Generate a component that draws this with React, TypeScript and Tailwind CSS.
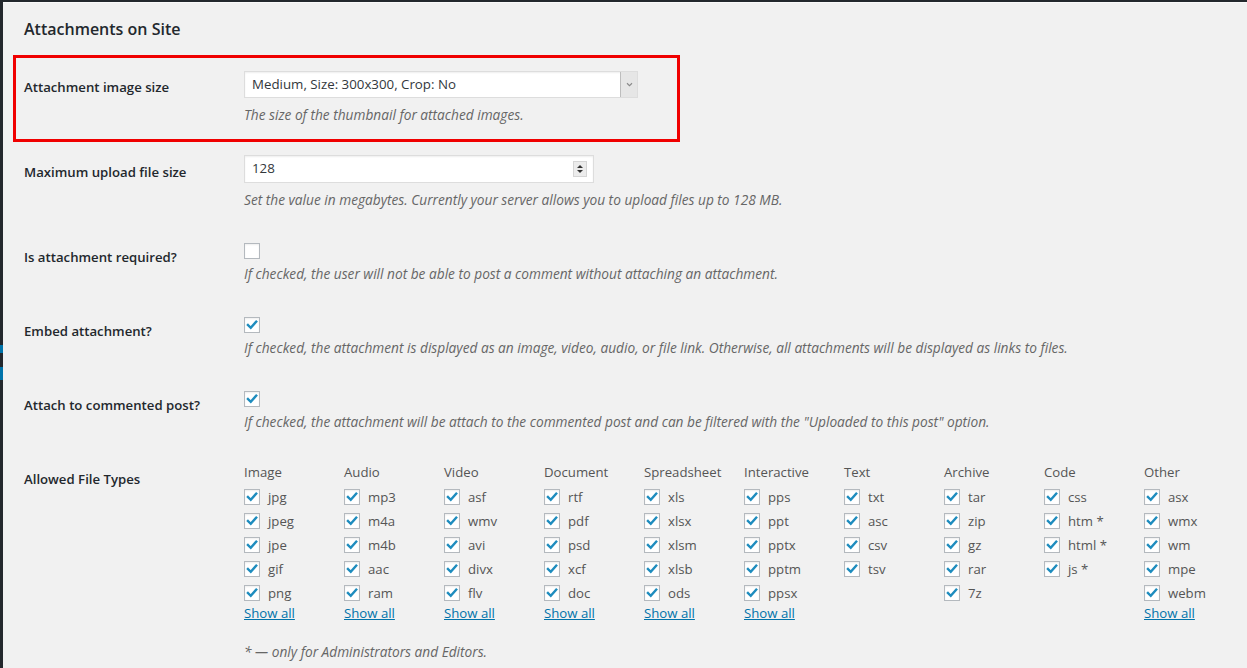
import React from 'react';

const groups: { title: string; items: string[]; showAll?: boolean }[] = [
  { title: 'Image', items: ['jpg', 'jpeg', 'jpe', 'gif', 'png'], showAll: true },
  { title: 'Audio', items: ['mp3', 'm4a', 'm4b', 'aac', 'ram'], showAll: true },
  { title: 'Video', items: ['asf', 'wmv', 'avi', 'divx', 'flv'], showAll: true },
  { title: 'Document', items: ['rtf', 'pdf', 'psd', 'xcf', 'doc'], showAll: true },
  { title: 'Spreadsheet', items: ['xls', 'xlsx', 'xlsm', 'xlsb', 'ods'], showAll: true },
  { title: 'Interactive', items: ['pps', 'ppt', 'pptx', 'pptm', 'ppsx'], showAll: true },
  { title: 'Text', items: ['txt', 'asc', 'csv', 'tsv'] },
  { title: 'Archive', items: ['tar', 'zip', 'gz', 'rar', '7z'] },
  { title: 'Code', items: ['css', 'htm *', 'html *', 'js *'] },
  { title: 'Other', items: ['asx', 'wmx', 'wm', 'mpe', 'webm'], showAll: true },
];

const font = { fontFamily: '"Open Sans", "Noto Sans", sans-serif' };

const Check = ({ checked }: { checked: boolean }) => (
  <span className="w-4 h-4 shrink-0 bg-white border border-[#b4b9be] shadow-[inset_0_1px_2px_rgba(0,0,0,0.07)] flex items-center justify-center">
    {checked && (
      <svg viewBox="0 0 16 16" className="w-4 h-4">
        <path d="M3.4 8 L6.6 11.2 L12.8 4.2" fill="none" stroke="#1e8cbe" strokeWidth="2.8" strokeLinecap="square" />
      </svg>
    )}
  </span>
);

const Desc = ({ children, className = '' }: { children: React.ReactNode; className?: string }) => (
  <p className={`text-[13.7px] leading-5 italic text-[#666] ${className}`}>{children}</p>
);

const Label = ({ children, className = '' }: { children: React.ReactNode; className?: string }) => (
  <div className={`w-[220px] shrink-0 text-[13.2px] leading-5 font-semibold text-[#23282d] ${className}`}>{children}</div>
);

export default function App() {
  return (
    <div className="w-[1247px] h-[668px] overflow-hidden flex bg-[#f1f1f1]" style={font}>
      <div className="w-[3px] flex flex-col bg-[#23282d]">
        <div className="h-[345px]" />
        <div className="h-[8px] bg-[#0073aa]" />
        <div className="h-[14px]" />
        <div className="h-[13px] bg-[#0073aa]" />
      </div>
      <div className="flex-1 flex flex-col">
        <div className="h-[2px] bg-[#23282d]" />
        <div className="h-[1px] bg-[#fafafa]" />
        <div className="pl-[21px] flex flex-col">
          <h2 className="h-[53px] pt-[16px] text-[16px] leading-5 font-semibold text-[#23282d]">Attachments on Site</h2>

          {/* row 1 */}
          <div className="relative flex h-[84px]">
            <div className="absolute left-[-11px] top-[-1px] w-[667px] h-[87px] border-[3px] border-[#f00000]" />
            <Label className="pt-[21px]">Attachment image size</Label>
            <div className="pt-[15px]">
              <div className="w-[394px] h-[27px] bg-white border border-[#ddd] shadow-[inset_0_1px_2px_rgba(0,0,0,0.07)] flex items-center justify-between">
                <span className="pl-[7px] text-[13.3px] text-[#32373c]">Medium, Size: 300x300, Crop: No</span>
                <span className="w-[17px] h-[25px] bg-[#e6e6e6] border-l border-[#bdbdbd] flex items-center justify-center">
                  <svg viewBox="0 0 8 6" className="w-[7px] h-[5px]">
                    <path d="M1 1.5 L4 4.5 L7 1.5" fill="none" stroke="#888" strokeWidth="1.3" />
                  </svg>
                </span>
              </div>
              <Desc className="mt-[7px]">The size of the thumbnail for attached images.</Desc>
            </div>
          </div>

          {/* row 2 */}
          <div className="flex h-[88px]">
            <Label className="pt-[22px]">Maximum upload file size</Label>
            <div className="pt-[15px]">
              <div className="w-[350px] h-[28px] bg-white border border-[#ddd] shadow-[inset_0_1px_2px_rgba(0,0,0,0.07)] flex items-center justify-between">
                <span className="pl-[7px] text-[13.3px] text-[#32373c]">128</span>
                <span className="mr-[6px] w-[14px] h-[16px] bg-[#ececec] border border-[#d5d5d5] flex flex-col items-center justify-center gap-[2px]">
                  <svg viewBox="0 0 6 3" className="w-[6px] h-[3px]"><path d="M0 3 L3 0 L6 3 Z" fill="#333" /></svg>
                  <svg viewBox="0 0 6 3" className="w-[6px] h-[3px]"><path d="M0 0 L3 3 L6 0 Z" fill="#333" /></svg>
                </span>
              </div>
              <Desc className="mt-[7px]">
                Set the value in megabytes. Currently your server allows you to upload files up to 128 MB.
              </Desc>
            </div>
          </div>

          {/* rows 3-5 */}
          {[
            { label: 'Is attachment required?', checked: false, desc: 'If checked, the user will not be able to post a comment without attaching an attachment.' },
            { label: 'Embed attachment?', checked: true, desc: 'If checked, the attachment is displayed as an image, video, audio, or file link. Otherwise, all attachments will be displayed as links to files.' },
            { label: 'Attach to commented post?', checked: true, desc: 'If checked, the attachment will be attach to the commented post and can be filtered with the "Uploaded to this post" option.' },
          ].map((r) => (
            <div key={r.label} className="flex h-[74px]">
              <Label className="pt-[19px]">{r.label}</Label>
              <div className="pt-[15px]">
                <Check checked={r.checked} />
                <Desc className="mt-[5px]">{r.desc}</Desc>
              </div>
            </div>
          ))}

          {/* file types */}
          <div className="flex">
            <Label className="pt-[19px]">Allowed File Types</Label>
            <div className="pt-[12px] flex flex-col">
              <div className="flex">
                {groups.map((g) => (
                  <div key={g.title} className="w-[100px] flex flex-col text-[13.2px] text-[#555]">
                    <div className="h-5 leading-5 mb-[3px]">{g.title}</div>
                    {g.items.map((it) => (
                      <div key={it} className="h-6 flex items-center">
                        <Check checked />
                        <span className="ml-2 leading-5">{it}</span>
                      </div>
                    ))}
                    {g.showAll && (
                      <a href="#" className="leading-4 text-[#0073aa] underline self-start">Show all</a>
                    )}
                  </div>
                ))}
              </div>
              <Desc className="mt-[21px]">* — only for Administrators and Editors.</Desc>
            </div>
          </div>
        </div>
      </div>
    </div>
  );
}
